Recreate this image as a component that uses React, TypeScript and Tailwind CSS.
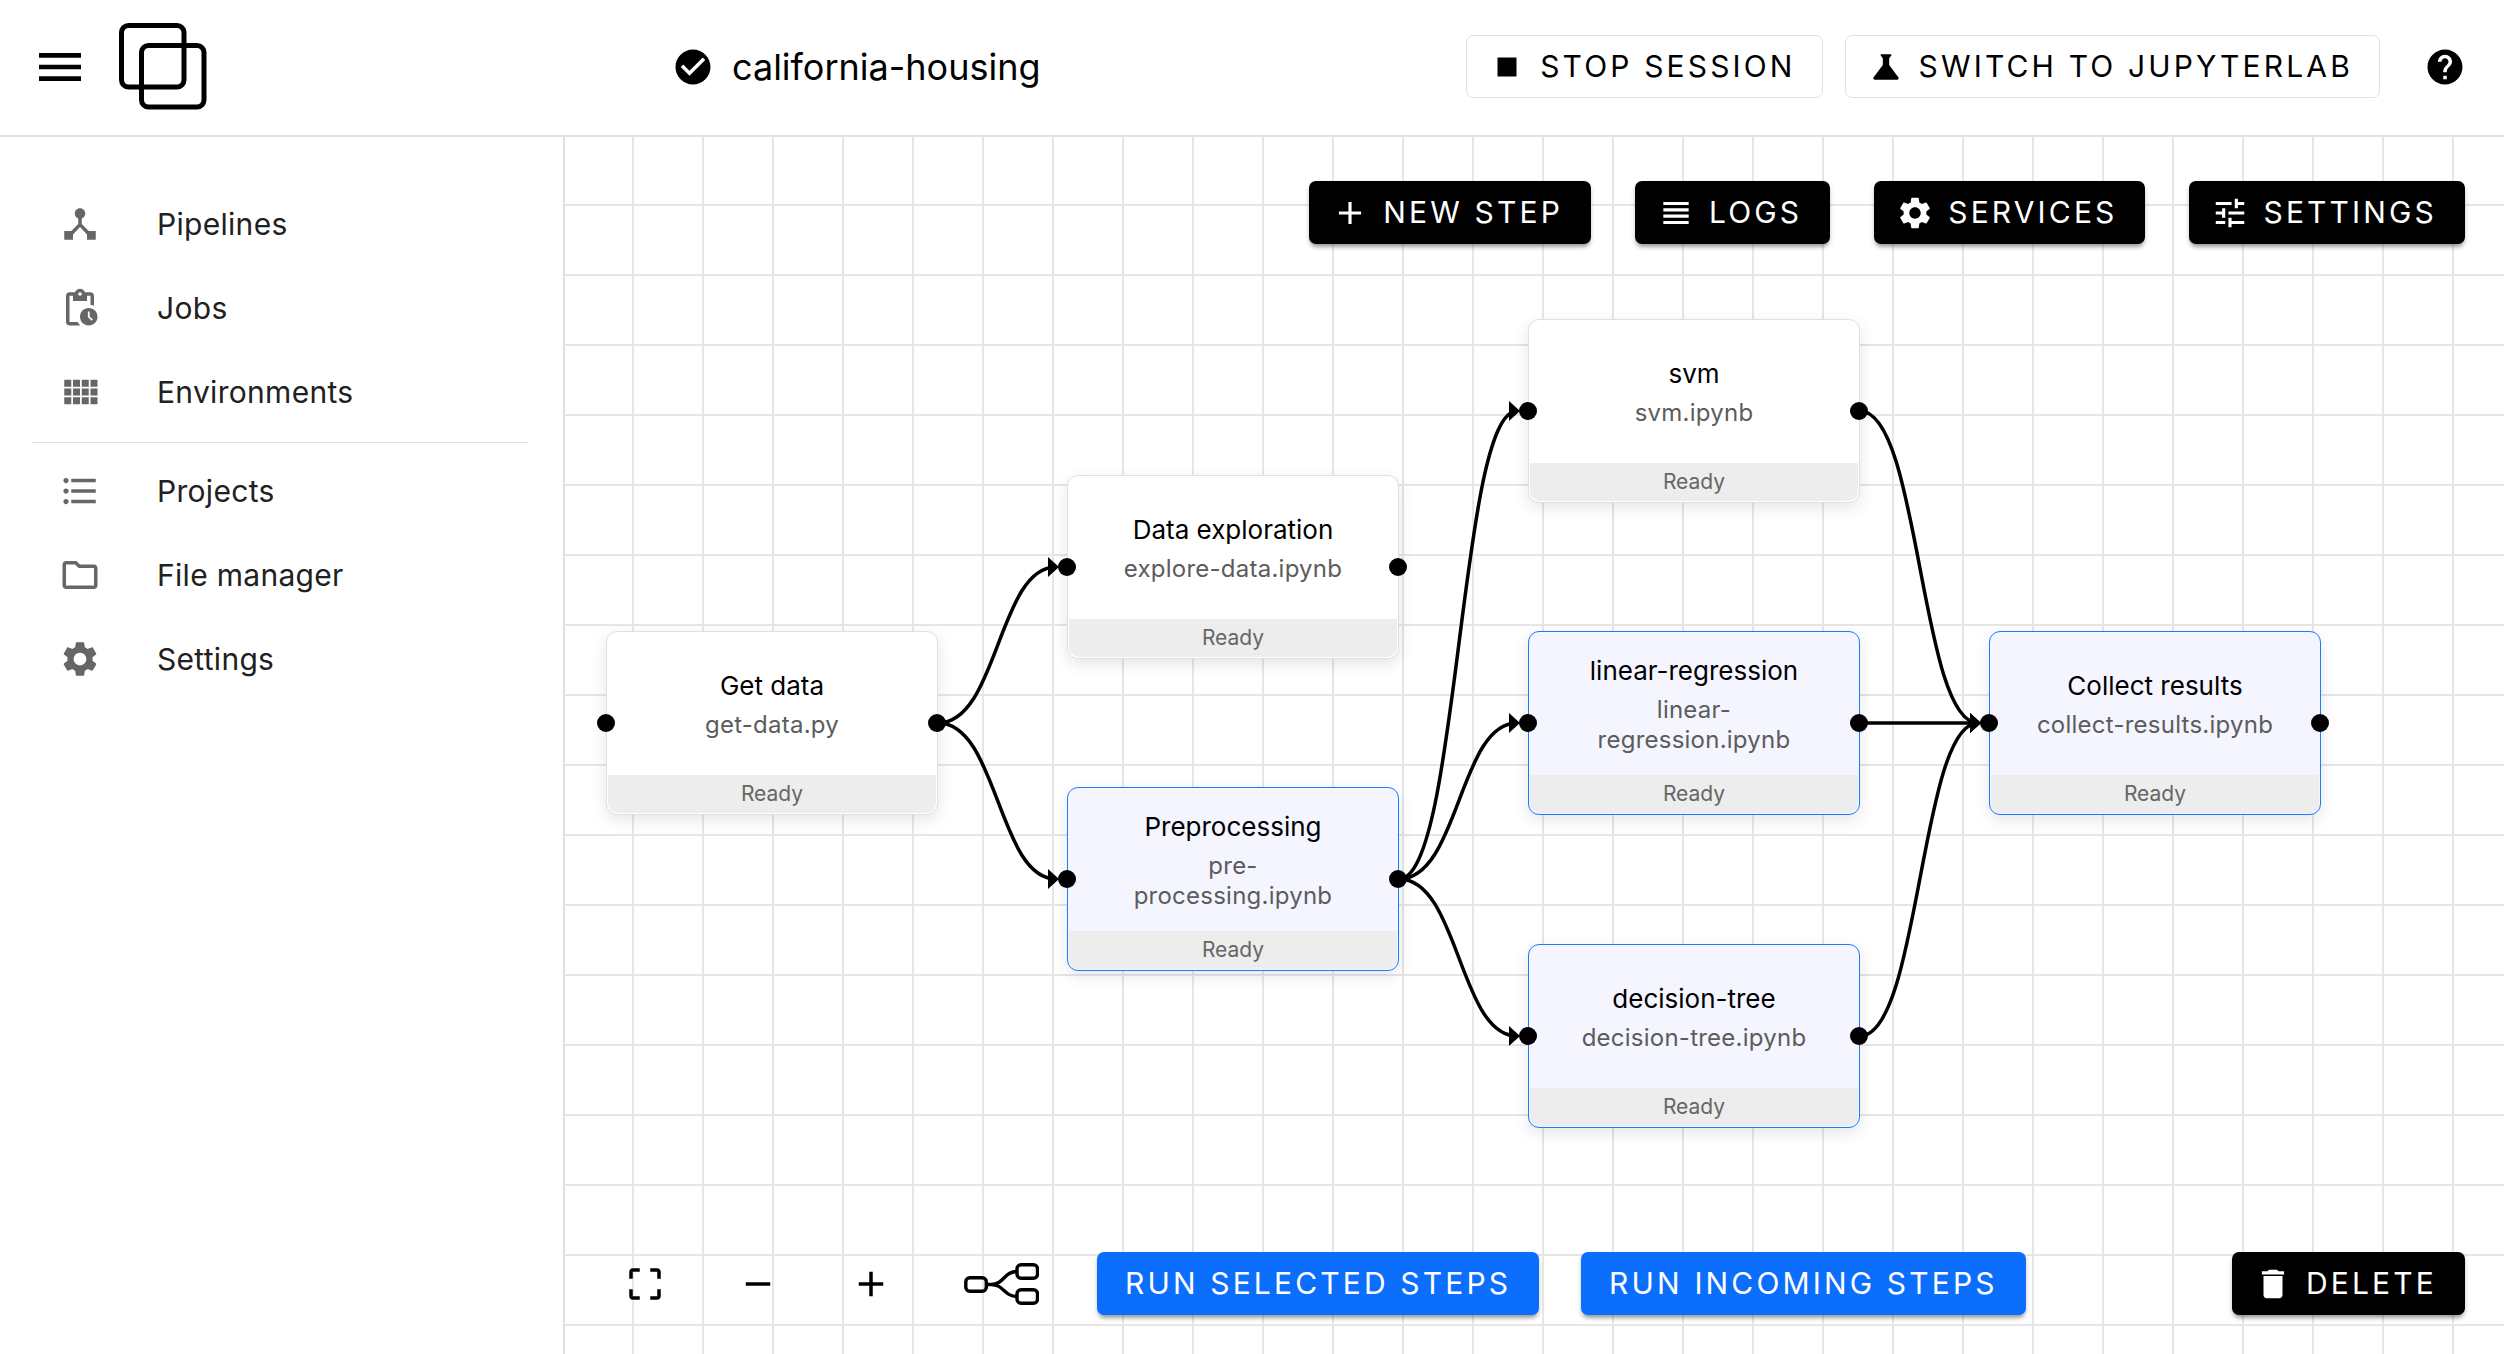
import React from "react";
import {
  MdAdd,
  MdCheckCircle,
  MdCropFree,
  MdDelete,
  MdDeviceHub,
  MdFormatListBulleted,
  MdHelp,
  MdMenu,
  MdOutlineFolder,
  MdPendingActions,
  MdRemove,
  MdScience,
  MdSettings,
  MdStop,
  MdTune,
  MdViewHeadline,
} from "react-icons/md";

type Icon = React.ComponentType<{ className?: string }>;
type NavItem = { label: string; icon: Icon };

function BlocksIcon({ className }: { className?: string }) {
  return (
    <svg viewBox="0 0 24 24" className={className} fill="currentColor" aria-hidden="true">
      <path d="M3 9h4V5H3v4zm0 5h4v-4H3v4zm5 0h4v-4H8v4zm5 0h4v-4h-4v4zM8 9h4V5H8v4zm5-4v4h4V5h-4zm5 9h4v-4h-4v4zM3 19h4v-4H3v4zm5 0h4v-4H8v4zm5 0h4v-4h-4v4zm5 0h4v-4h-4v4zm0-14v4h4V5h-4z" />
    </svg>
  );
}

const primaryNav: NavItem[] = [
  { label: "Pipelines", icon: MdDeviceHub },
  { label: "Jobs", icon: MdPendingActions },
  { label: "Environments", icon: BlocksIcon },
];

const secondaryNav: NavItem[] = [
  { label: "Projects", icon: MdFormatListBulleted },
  { label: "File manager", icon: MdOutlineFolder },
  { label: "Settings", icon: MdSettings },
];

type Step = {
  id: string;
  title: string;
  file: string;
  x: number;
  y: number;
  selected?: boolean;
};

const NODE_WIDTH = 332;
const NODE_MIDDLE = 92;

const steps: Step[] = [
  { id: "get", title: "Get data", file: "get-data.py", x: 41, y: 494 },
  { id: "explore", title: "Data exploration", file: "explore-data.ipynb", x: 502, y: 338 },
  { id: "pre", title: "Preprocessing", file: "pre-processing.ipynb", x: 502, y: 650, selected: true },
  { id: "svm", title: "svm", file: "svm.ipynb", x: 963, y: 182 },
  { id: "linear", title: "linear-regression", file: "linear-regression.ipynb", x: 963, y: 494, selected: true },
  { id: "tree", title: "decision-tree", file: "decision-tree.ipynb", x: 963, y: 807, selected: true },
  { id: "collect", title: "Collect results", file: "collect-results.ipynb", x: 1424, y: 494, selected: true },
];

const edges: [string, string][] = [
  ["get", "explore"],
  ["get", "pre"],
  ["pre", "svm"],
  ["pre", "linear"],
  ["pre", "tree"],
  ["svm", "collect"],
  ["linear", "collect"],
  ["tree", "collect"],
];

function Logo() {
  return (
    <svg viewBox="0 0 88 88" className="size-[88px]" fill="none" stroke="#000" strokeWidth="5" aria-hidden="true">
      <rect x="2.5" y="2.5" width="62.5" height="61.5" rx="7" />
      <rect x="22.5" y="22.5" width="62.5" height="61.5" rx="7" />
    </svg>
  );
}

function TreeIcon() {
  return (
    <svg viewBox="0 0 76 44" className="h-11 w-[76px]" fill="none" stroke="currentColor" strokeWidth="3.4" aria-hidden="true">
      <rect x="2.8" y="15.8" width="20.5" height="13.5" rx="4" />
      <rect x="54" y="2.8" width="20.5" height="13.5" rx="4" />
      <rect x="54" y="27.8" width="20.5" height="13.5" rx="4" />
      <path d="M24 22.500h4c13 0 13-13 26-13M28 22.500c13 0 13 12 26 12" />
    </svg>
  );
}

function NavList({ items }: { items: NavItem[] }) {
  return (
    <ul>
      {items.map(({ label, icon: Icon }) => (
        <li key={label}>
          <a href="#" className="flex h-[84px] items-center gap-14 px-[59px] text-[30px] tracking-[0.01em] text-[#212121]">
            <Icon className="size-[42px] text-[#666]" aria-hidden="true" />
            {label}
          </a>
        </li>
      ))}
    </ul>
  );
}

type ActionProps = {
  label: string;
  icon?: Icon;
  tone: "outline" | "black" | "blue";
};

const tones = {
  outline: "border border-[#e0e0e0] bg-white pr-[26px] pl-[21px] text-black",
  black: "bg-black pr-7 pl-[22px] text-white shadow-[0_5px_4px_-3px_rgba(0,0,0,0.3),0_3px_5px_rgba(0,0,0,0.2)]",
  blue: "bg-[#0b6efd] px-7 text-white shadow-[0_5px_4px_-3px_rgba(0,0,0,0.3),0_3px_5px_rgba(0,0,0,0.2)]",
};

function Action({ label, icon: Icon, tone }: ActionProps) {
  return (
    <button
      type="button"
      className={`flex h-[63px] items-center gap-3.5 rounded-[7px] text-[30px] tracking-[0.105em] whitespace-nowrap uppercase ${tones[tone]}`}
    >
      {Icon && <Icon className="size-[38px]" aria-hidden="true" />}
      {label}
    </button>
  );
}

function IconButton({ label, children }: { label: string; children: React.ReactNode }) {
  return (
    <button type="button" aria-label={label} className="flex min-w-[42px] items-center justify-center text-[42px] text-black">
      {children}
    </button>
  );
}

function StepNode({ step }: { step: Step }) {
  return (
    <article
      className={`absolute flex h-[184px] w-[332px] flex-col rounded-[11px] border shadow-[0_5px_16px_rgba(0,0,0,0.1)] ${
        step.selected ? "border-[#1e7bff] bg-[#f4f5ff]" : "border-[#e0e0e0] bg-white"
      }`}
      style={{ left: step.x, top: step.y }}
    >
      <div className="flex flex-1 flex-col items-center justify-center gap-2 px-11 pt-0.5 text-center">
        <h2 className="text-[26px] leading-8 whitespace-nowrap text-black">{step.title}</h2>
        <p className="text-[24px] leading-[30px] tracking-[0.01em] text-[#5c5c5c]">{step.file}</p>
      </div>
      <p className="mx-px mb-px rounded-b-[10px] bg-[#ededed] text-center text-[21px] leading-[38px] text-[#666]">Ready</p>
      <span className="absolute top-1/2 -left-px size-[18px] -translate-1/2 rounded-full bg-black" />
      <span className="absolute top-1/2 left-full size-[18px] -translate-1/2 rounded-full bg-black" />
    </article>
  );
}

function Connections() {
  const byId = Object.fromEntries(steps.map((s) => [s.id, s]));
  return (
    <svg className="absolute inset-0 size-full" fill="none" stroke="#000" strokeWidth="3.5" aria-hidden="true">
      {edges.map(([from, to]) => {
        const x1 = byId[from].x + NODE_WIDTH;
        const y1 = byId[from].y + NODE_MIDDLE;
        const x2 = byId[to].x - 9;
        const y2 = byId[to].y + NODE_MIDDLE;
        const mid = (x1 + x2) / 2;
        return (
          <g key={from + to}>
            <path d={`M${x1} ${y1}C${mid} ${y1} ${mid} ${y2} ${x2 - 2} ${y2}`} />
            <path d={`M${x2 - 10} ${y2 - 10}l11 10l-11 10z`} fill="#000" stroke="none" />
          </g>
        );
      })}
    </svg>
  );
}

export default function App() {
  return (
    <div className="flex h-screen flex-col bg-white font-['Inter',sans-serif] text-black">
      <header className="flex h-[137px] shrink-0 items-center border-b-2 border-[#e0e0e0] pr-[38px] pb-0.5 pl-8">
        <div className="flex w-[640px] items-center gap-[31px]">
          <button type="button" aria-label="Menu">
            <MdMenu className="size-14" />
          </button>
          <a href="#" aria-label="Home">
            <Logo />
          </a>
        </div>
        <div className="flex flex-1 items-center gap-[18px]">
          <MdCheckCircle className="size-[42px]" aria-hidden="true" />
          <h1 className="text-[36px]">california-housing</h1>
        </div>
        <div className="flex items-center gap-[22px]">
          <Action label="Stop session" icon={MdStop} tone="outline" />
          <Action label="Switch to JupyterLab" icon={MdScience} tone="outline" />
          <button type="button" aria-label="Help" className="ml-[22px]">
            <MdHelp className="size-[42px]" />
          </button>
        </div>
      </header>

      <div className="flex min-h-0 flex-1">
        <nav className="w-[565px] shrink-0 border-r-2 border-[#e0e0e0] pt-[45px]" aria-label="Main">
          <NavList items={primaryNav} />
          <hr className="mt-2 mr-[35px] mb-1.5 ml-8 border-[#e0e0e0]" />
          <NavList items={secondaryNav} />
        </nav>

        <main className="relative flex flex-1 flex-col justify-between overflow-hidden bg-[linear-gradient(to_right,#e6e6e6_2px,transparent_2px),linear-gradient(to_bottom,#e6e6e6_2px,transparent_2px)] bg-[length:70px_70px] bg-[position:-3px_-3px] px-[39px] pt-11 pb-[39px]">
          <Connections />
          {steps.map((step) => (
            <StepNode key={step.id} step={step} />
          ))}

          <div className="relative flex justify-end gap-11">
            <Action label="New step" icon={MdAdd} tone="black" />
            <Action label="Logs" icon={MdViewHeadline} tone="black" />
            <Action label="Services" icon={MdSettings} tone="black" />
            <Action label="Settings" icon={MdTune} tone="black" />
          </div>

          <div className="relative flex items-center gap-[42px]">
            <div className="flex items-center gap-[71px] pr-4 pl-5">
              <IconButton label="Fit to screen"><MdCropFree /></IconButton>
              <IconButton label="Zoom out"><MdRemove /></IconButton>
              <IconButton label="Zoom in"><MdAdd /></IconButton>
              <IconButton label="Auto layout"><TreeIcon /></IconButton>
            </div>
            <Action label="Run selected steps" tone="blue" />
            <Action label="Run incoming steps" tone="blue" />
            <div className="ml-auto">
              <Action label="Delete" icon={MdDelete} tone="black" />
            </div>
          </div>
        </main>
      </div>
    </div>
  );
}
